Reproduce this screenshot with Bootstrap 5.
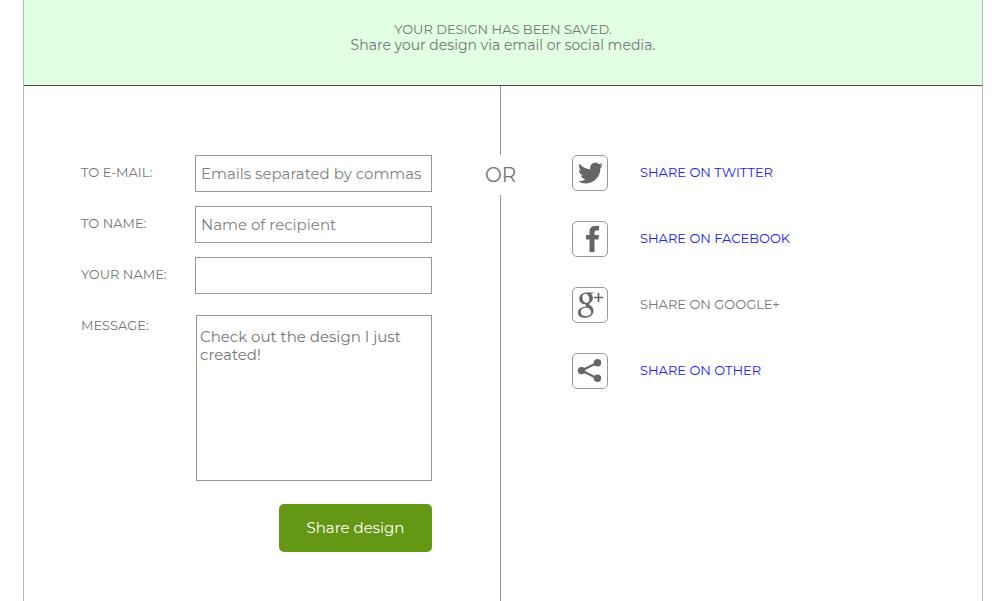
<!DOCTYPE html>
<html lang="en">
<head>
<meta charset="utf-8">
<meta name="viewport" content="width=device-width, initial-scale=1">
<title>Share your design</title>
<link href="https://cdn.jsdelivr.net/npm/bootstrap@5.3.0/dist/css/bootstrap.min.css" rel="stylesheet">
<style>
  body { font-family: Montserrat, Inter, sans-serif; font-size: 13px; font-weight: 400; color: #757575; background: #fff; }
  .share-page { margin-left: 23px; margin-right: 16px; border: solid #bbb; border-width: 0 1px; }
  .saved-banner { background: #e1ffe2; border-bottom: 1px solid #444; padding: 22px 0 32px; line-height: 15px; }
  .saved-detail { font-size: 14px; line-height: 16px; }
  .share-body { display: grid; grid-template-columns: minmax(0, 1fr) 31px minmax(0, 1fr); padding-right: 5px; }
  .share-form { padding: 69px 53px 49px 57px; }
  .form-line { display: grid; grid-template-columns: 114px minmax(0, 1fr); margin-bottom: 14px; }
  .form-line label { line-height: 35px; }
  .form-line .form-control { font-size: 15px; font-weight: 400; color: #757575; border: 1px solid #999; border-radius: 0; }
  .form-line input.form-control { height: 37px; padding: 0 5px; }
  .form-line .form-control::placeholder { color: #808080; opacity: 1; }
  .form-line textarea.form-control { height: 166px; margin: 7px 0 0 1px; width: auto; padding: 12px 3px; line-height: 18px; resize: none; }
  .share-btn { --bs-btn-bg: #649714; --bs-btn-color: #fff; --bs-btn-hover-bg: #547f10; --bs-btn-hover-color: #fff; --bs-btn-border-radius: 5px; border: 0; width: 153px; padding: 0; line-height: 48px; font-size: 15px; font-weight: 400; margin-top: 9px; }
  .rule { width: 1px; background: #999; }
  .rule-top { height: 69px; }
  .or-text { font-size: 20px; line-height: 40px; }
  .share-links { padding: 69px 0 0 56px; gap: 30px; }
  .share-link { gap: 32px; color: #757575; text-decoration: none; }
  a.share-link { color: #2020ff; }
  .share-link svg { width: 36px; height: 36px; flex: none; color: #666; }
</style>
<script src="https://cdn.jsdelivr.net/npm/bootstrap@5.3.0/dist/js/bootstrap.bundle.min.js"></script>
</head>
<body>
<div class="share-page d-flex flex-column min-vh-100">
  <header class="saved-banner text-center">
    <div>YOUR DESIGN HAS BEEN SAVED.</div>
    <div class="saved-detail">Share your design via email or social media.</div>
  </header>
  <main class="share-body flex-grow-1">
    <form class="share-form">
      <div class="form-line">
        <label for="toEmail">TO E-MAIL:</label>
        <input class="form-control" id="toEmail" type="text" placeholder="Emails separated by commas">
      </div>
      <div class="form-line">
        <label for="toName">TO NAME:</label>
        <input class="form-control" id="toName" type="text" placeholder="Name of recipient">
      </div>
      <div class="form-line">
        <label for="yourName">YOUR NAME:</label>
        <input class="form-control" id="yourName" type="text">
      </div>
      <div class="form-line">
        <label for="message">MESSAGE:</label>
        <textarea class="form-control" id="message">Check out the design I just created!</textarea>
      </div>
      <div class="d-flex justify-content-end">
        <button class="btn share-btn" type="button">Share design</button>
      </div>
    </form>
    <div class="d-flex flex-column align-items-center">
      <div class="rule rule-top"></div>
      <div class="or-text">OR</div>
      <div class="rule flex-grow-1"></div>
    </div>
    <nav class="share-links d-flex flex-column align-items-start" aria-label="Social sharing">
      <a class="share-link d-flex align-items-center" href="#twitter">
        <svg viewBox="0 0 36 36" aria-hidden="true"><rect x=".5" y=".5" width="35" height="35" rx="4.500" fill="#fff" stroke="#999"/><path transform="translate(6 4.500) scale(1.560 1.600)" fill="currentColor" d="M5.026 15c6.038 0 9.341-5.003 9.341-9.334q.002-.211-.006-.422A6.700 6.700 0 0 0 16 3.542a6.700 6.700 0 0 1-1.889.518 3.300 3.300 0 0 0 1.447-1.817 6.500 6.500 0 0 1-2.087.793A3.286 3.286 0 0 0 7.875 6.030a9.320 9.320 0 0 1-6.767-3.429 3.290 3.290 0 0 0 1.018 4.382A3.300 3.300 0 0 1 .64 6.575v.045a3.290 3.290 0 0 0 2.632 3.218 3.200 3.200 0 0 1-.865.115 3 3 0 0 1-.614-.057 3.280 3.280 0 0 0 3.067 2.277A6.600 6.600 0 0 1 .78 13.580a6 6 0 0 1-.78-.045A9.340 9.340 0 0 0 5.026 15"/></svg>
        <span>SHARE ON TWITTER</span>
      </a>
      <a class="share-link d-flex align-items-center" href="#facebook">
        <svg viewBox="0 0 36 36" aria-hidden="true"><rect x=".5" y=".5" width="35" height="35" rx="4.500" fill="#fff" stroke="#999"/><path fill="currentColor" d="M17.500 31V18.500H14V14h3.500v-3.200C17.500 7 19.700 5 23.500 5H27v4.600h-2.500c-1.500 0-2 .7-2 2V14H27l-.6 4.500h-3.900V31z"/></svg>
        <span>SHARE ON FACEBOOK</span>
      </a>
      <div class="share-link d-flex align-items-center">
        <svg viewBox="0 0 36 36" aria-hidden="true"><rect x=".5" y=".5" width="35" height="35" rx="4.500" fill="#fff" stroke="#999"/><path fill="currentColor" fill-rule="evenodd" d="M14.600 5.500H22l-1.800 1.300h-1.500c1.400 1 2.200 2.500 2.200 4.300 0 2-1 3.400-2.600 4.600-1.500 1.100-1.300 1.900-.1 2.800 2.200 1.500 3.300 2.700 3.300 5.200 0 3.800-3.400 7-8.400 7-4.300 0-7.200-1.900-7.200-5 0-3.700 3.700-5.900 8.400-5.900-.8-.8-1-1.700-.5-2.700-4 .3-6.500-2.100-6.500-5.400 0-3.700 3.300-6.200 7.300-6.200zM13.100 6.700c-2 .2-3 2.100-2.600 4.500.4 2.900 2.200 4.900 4.200 4.700 2-.2 2.900-2.100 2.600-4.600-.4-2.900-2.200-4.800-4.200-4.600zM14.700 20.700c-3.500 0-6 1.500-6 4 0 2.600 2.200 4.400 5.500 4.400 3.200 0 5-1.500 5-3.800 0-2.200-1.400-3.200-3.200-4.500z"/><path fill="none" stroke="currentColor" stroke-width="1.700" d="M26.500 6v9M22 10.500h9"/></svg>
        <span>SHARE ON GOOGLE+</span>
      </div>
      <a class="share-link d-flex align-items-center" href="#other">
        <svg viewBox="0 0 36 36" aria-hidden="true"><rect x=".5" y=".5" width="35" height="35" rx="4.500" fill="#fff" stroke="#999"/><path fill="none" stroke="currentColor" stroke-width="2.200" d="M25.500 9.700 9.500 17.600l16 7.900"/><g fill="currentColor"><circle cx="25.500" cy="9.700" r="3.700"/><circle cx="9.500" cy="17.600" r="3.700"/><circle cx="25.500" cy="25.300" r="3.700"/></g></svg>
        <span>SHARE ON OTHER</span>
      </a>
    </nav>
  </main>
</div>
</body>
</html>
